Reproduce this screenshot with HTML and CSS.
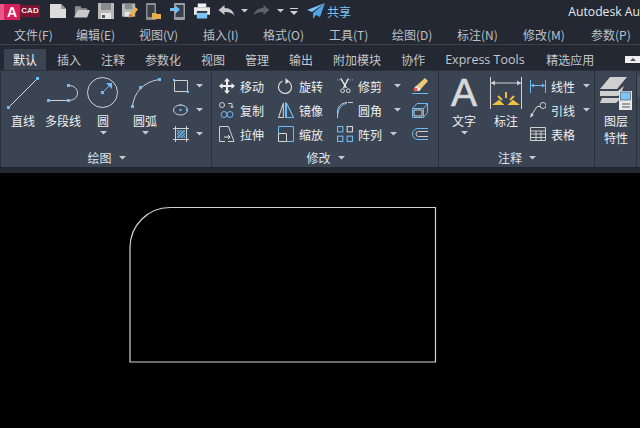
FILE: index.html
```html
<!DOCTYPE html>
<html lang="zh">
<head>
<meta charset="utf-8">
<title>Autodesk AutoCAD</title>
<link rel="stylesheet" href="styles.css">
</head>
<body>
<svg width="0" height="0" class="defs">
  <defs>
    <g id="tri"><path d="M0 0h7l-3.500 3.500z" fill="#c8ccd2"/></g>
  </defs>
</svg>
<header class="titlebar">
  <div class="logo"><span class="logo-a">A</span><span class="logo-cad">CAD</span></div>
  <div class="quick">
    <svg class="qa" width="16" height="16" viewBox="0 0 16 16"><path d="M0 1h11l5 5v9H0z" fill="#dcdcdc"/><path d="M11 1v5h5z" fill="#9a9a9a"/></svg>
    <svg class="qa" width="16" height="16" viewBox="0 0 17 16"><path d="M1 3h6l1 2h6v2H4L1 14z" fill="#8d8d8d"/><path d="M4 7h13l-3 8H0z" fill="#c9c9c9"/></svg>
    <svg class="qa" width="16" height="16" viewBox="0 0 16 16"><path d="M0 0h16v16H0z" fill="#b9b9b9"/><path d="M3 0h10v7H3z" fill="#8b8b8b"/><path d="M3 10h10v6H3z" fill="#e5e5e5"/><path d="M4 12h3v3H4z" fill="#555"/></svg>
    <svg class="qa" width="16" height="17" viewBox="0 0 17 17"><path d="M0 0h14v14H0z" fill="#b9b9b9"/><path d="M3 0h8v6H3z" fill="#8b8b8b"/><path d="M3 9h6v5H3z" fill="#e5e5e5"/><path d="M7 15l1-4 6-7 3 2-6 8z" fill="#e8b34e"/><path d="M7 15l1-4 3 2z" fill="#e06a5a"/></svg>
    <svg class="qa" width="16" height="17" viewBox="0 0 16 17"><rect x="0" y="0" width="10" height="17" rx="1" fill="#8a8f96"/><rect x="1.500" y="2" width="7" height="12" fill="#3a3f48"/><path d="M6 10h4l1 1h4v5H6z" fill="#e7b04c"/></svg>
    <svg class="qa" width="16" height="17" viewBox="0 0 16 17"><rect x="4" y="0" width="11" height="17" rx="1" fill="#9a9ea5"/><rect x="5.500" y="2" width="8" height="12" fill="#3a3f48"/><path d="M0 5h5V2l5 4.500-5 4.500V8H0z" fill="#6cc0f5"/></svg>
    <svg class="qa" width="16" height="16" viewBox="0 0 17 16"><path d="M4 0h9v4H4z" fill="#f2f2f2"/><path d="M0 4h17v8H0z" fill="#e8e8e8"/><path d="M3 8h11v8H3z" fill="#7cc2f2"/><path d="M3 8h11v2H3z" fill="#33373f"/></svg>
    <svg class="undo" width="17" height="12" viewBox="0 0 16 12"><path d="M0 5l6-5v3c6 0 9 3 10 8-2-3-5-4-10-4v3z" fill="#c8c8c8"/></svg>
    <svg class="qa-tri" width="7" height="4" viewBox="0 0 7 4"><use href="#tri"/></svg>
    <svg class="redo" width="17" height="12" viewBox="0 0 16 12"><path d="M16 5l-6-5v3C4 3 1 6 0 11c2-3 5-4 10-4v3z" fill="#5d6168"/></svg>
    <svg class="qa-tri" width="7" height="4" viewBox="0 0 7 4"><use href="#tri"/></svg>
    <svg class="qa-more" width="8" height="7" viewBox="0 0 8 7"><path d="M0 0h8v1H0z" fill="#d0d0d0"/><path d="M0 3h8L4 7z" fill="#d0d0d0"/></svg>
    <svg class="share-icon" width="18" height="16" viewBox="0 0 18 16"><path d="M18 0L0 7l5 2z" fill="#7cc4f5"/><path d="M18 0L6 10v6l3-4 4 2z" fill="#4da3e0"/></svg>
    <span class="share">共享</span>
  </div>
  <div class="apptitle">Autodesk Au</div>
</header>
<nav class="menubar">
  <span>文件(F)</span><span>编辑(E)</span><span>视图(V)</span><span>插入(I)</span><span>格式(O)</span><span>工具(T)</span><span>绘图(D)</span><span>标注(N)</span><span>修改(M)</span><span>参数(P)</span>
</nav>
<nav class="tabs">
  <span class="tab active">默认</span><span class="tab">插入</span><span class="tab">注释</span><span class="tab">参数化</span><span class="tab">视图</span><span class="tab">管理</span><span class="tab">输出</span><span class="tab">附加模块</span><span class="tab">协作</span><span class="tab en">Express Tools</span><span class="tab">精选应用</span>
  <span class="collapse"><svg width="6" height="3" viewBox="0 0 6 3"><path d="M0 3l3-3 3 3z" fill="#555"/></svg></span>
</nav>
<section class="ribbon">
  <div class="panel draw">
    <div class="panel-body">
      <div class="big w-line">
        <svg width="32" height="32" viewBox="0 0 32 32"><path d="M1.500 30.500L30.500 1.500" stroke="#d8d8d8" fill="none"/><rect x="0" y="29" width="3" height="3" fill="#6ebcf5"/><rect x="29" y="0" width="3" height="3" fill="#6ebcf5"/></svg>
        <span>直线</span>
      </div>
      <div class="big w-pline">
        <svg width="32" height="32" viewBox="0 0 32 32"><path d="M2 23.500h19.500M21.500 8.500c12 0 12 15 0 15" stroke="#d0d0d0" fill="none"/><rect x="0" y="22" width="3" height="3" fill="#6ebcf5"/><rect x="20" y="22" width="3" height="3" fill="#6ebcf5"/><rect x="20" y="7" width="3" height="3" fill="#6ebcf5"/></svg>
        <span>多段线</span>
      </div>
      <div class="big w-circle">
        <svg width="32" height="32" viewBox="0 0 32 32"><circle cx="15.500" cy="15.500" r="15" stroke="#d0d0d0" fill="none"/><path d="M15.500 15.500l7-7" stroke="#6ebcf5" fill="none"/><path d="M25 6v6l-6-6z" fill="#6ebcf5"/><rect x="14" y="14" width="3" height="3" fill="#6ebcf5"/></svg>
        <span>圆</span>
        <svg class="tri" width="7" height="4" viewBox="0 0 7 4"><use href="#tri"/></svg>
      </div>
      <div class="big w-arc">
        <svg width="32" height="32" viewBox="0 0 32 32"><path d="M3.500 29C5 16 14 5 30 2.500" stroke="#d0d0d0" fill="none"/><rect x="2" y="28" width="3" height="3" fill="#6ebcf5"/><rect x="10" y="9" width="3" height="3" fill="#6ebcf5"/><rect x="29" y="1" width="3" height="3" fill="#6ebcf5"/></svg>
        <span>圆弧</span>
        <svg class="tri" width="7" height="4" viewBox="0 0 7 4"><use href="#tri"/></svg>
      </div>
      <div class="minis">
        <div class="mini"><svg width="16" height="16" viewBox="0 0 16 16"><path d="M1.500 2.500h13v11h-13z" stroke="#d0d0d0" fill="none"/><rect x="0" y="1" width="2" height="2" fill="#6ebcf5"/><rect x="14" y="13" width="2" height="2" fill="#6ebcf5"/></svg><svg class="tri" width="7" height="4" viewBox="0 0 7 4"><use href="#tri"/></svg></div>
        <div class="mini"><svg width="16" height="16" viewBox="0 0 16 16"><ellipse cx="7.500" cy="8" rx="7" ry="5" stroke="#d0d0d0" fill="none"/><rect x="6.500" y="2" width="2" height="2" fill="#6ebcf5"/><rect x="6.500" y="7" width="2" height="2" fill="#6ebcf5"/><rect x="13" y="7" width="2" height="2" fill="#6ebcf5"/></svg><svg class="tri" width="7" height="4" viewBox="0 0 7 4"><use href="#tri"/></svg></div>
        <div class="mini"><svg width="16" height="16" viewBox="0 0 16 16"><path d="M2.500 0v16M13.500 0v16M0 2.500h16M0 13.500h16" stroke="#d0d0d0" fill="none"/><path d="M4 4h8v8H4z" fill="#6ebcf5" opacity=".75"/><path d="M4 10l6-6M6 12l6-6M4 7l3-3M9 12l3-3" stroke="#3c4552" stroke-width=".7"/></svg><svg class="tri" width="7" height="4" viewBox="0 0 7 4"><use href="#tri"/></svg></div>
      </div>
    </div>
    <div class="panel-title">绘图<svg width="7" height="4" viewBox="0 0 7 4"><use href="#tri"/></svg></div>
  </div>

  <div class="panel modify">
    <div class="panel-body">
      <div class="modgrid">
        <div class="tool"><svg width="16" height="16" viewBox="0 0 16 16"><path d="M8 0l3 3.500H9V7h3.500V5L16 8l-3.500 3V9H9v3.500h2L8 16l-3-3.500h2V9H3.500v2L0 8l3.500-3v2H7V3.500H5z" fill="#ececec"/></svg><span>移动</span></div>
        <div class="tool"><svg width="16" height="16" viewBox="0 0 15 16"><path d="M10 3.500A6.500 6.500 0 1 1 4 3" stroke="#d8d8d8" stroke-width="1.200" fill="none"/><path d="M7 0l4 3.500L7 6z" fill="#e0e0e0"/></svg><span>旋转</span></div>
        <div class="tool"><svg width="16" height="16" viewBox="0 0 17 16"><path d="M0 1.500h5M12 1.500h5" stroke="#6ebcf5" stroke-dasharray="1 1"/><path d="M4 0l6 10M12 0L7 10" stroke="#e8e8e8" stroke-width="1.500"/><circle cx="6" cy="13" r="2" stroke="#e8e8e8" fill="none"/><circle cx="12" cy="13" r="2" stroke="#e8e8e8" fill="none"/></svg><span>修剪</span><svg class="tri" width="7" height="4" viewBox="0 0 7 4"><use href="#tri"/></svg></div>
        <svg class="edit" width="16" height="16" viewBox="0 0 16 16"><path d="M3 9L13 0l3 3-9 10z" fill="#f0c878"/><path d="M2 10l2-2 5 3-2 2H3z" fill="#f0f0f0"/><circle cx="3.500" cy="11.500" r="2" fill="#e8584f"/><path d="M0 15.500h16" stroke="#6ebcf5"/></svg>

        <div class="tool"><svg width="16" height="16" viewBox="0 0 16 16"><circle cx="3" cy="3" r="2.500" stroke="#d0d0d0" fill="none"/><path d="M9 1.500h4V5M11.500 4l1.500 2 1.500-2" stroke="#d0d0d0" fill="none"/><circle cx="5" cy="12.500" r="3" stroke="#6ebcf5" fill="none"/><circle cx="11" cy="12.500" r="3" stroke="#6ebcf5" fill="none"/></svg><span>复制</span></div>
        <div class="tool"><svg width="16" height="16" viewBox="0 0 15 15"><path d="M5 1L.5 14.500H5z" stroke="#d0d0d0" fill="none"/><path d="M8 1l6.500 13.500H8zM7 0v15" stroke="#6ebcf5" fill="none"/></svg><span>镜像</span></div>
        <div class="tool"><svg width="16" height="16" viewBox="0 0 16 16"><path d="M.5 16v-6C.5 5 4 1 10 .5M11 .5h5" stroke="#d0d0d0" fill="none"/><path d="M.5 15C1 6 5 2 10 1.500" stroke="#6ebcf5" fill="none"/></svg><span>圆角</span><svg class="tri" width="7" height="4" viewBox="0 0 7 4"><use href="#tri"/></svg></div>
        <svg class="edit" width="16" height="15" viewBox="0 0 16 15"><path d="M.5 5.500h11v9H.5zM.5 5.500L5 .5h10.500v9l-4 5M11.500 5.500l4-5" stroke="#6ebcf5" fill="none"/><path d="M2 7h8v6H2z" stroke="#d8d8d8" fill="none"/></svg>

        <div class="tool"><svg width="16" height="16" viewBox="0 0 16 16"><path d="M6 15.500H.5V.5h9M9.500.500L15 15.500H9" stroke="#d0d0d0" fill="none"/><path d="M5 11h6M9 9l2 2-2 2" stroke="#e8e8e8" fill="none"/></svg><span>拉伸</span></div>
        <div class="tool"><svg width="16" height="16" viewBox="0 0 16 16"><path d="M.5 7V.5h15v15H9" stroke="#6ebcf5" fill="none"/><path d="M.5 7.500h8v8h-8z" stroke="#d8d8d8" fill="none"/></svg><span>缩放</span></div>
        <div class="tool"><svg width="16" height="16" viewBox="0 0 15 15"><g fill="none" stroke="#6ebcf5"><rect x=".5" y=".5" width="5" height="5"/><rect x="9.500" y="9.500" width="5" height="5"/><rect x=".5" y="9.500" width="5" height="5"/></g><rect x="9.500" y=".5" width="5" height="5" fill="none" stroke="#d8d8d8"/></svg><span>阵列</span><svg class="tri tri-near" width="7" height="4" viewBox="0 0 7 4"><use href="#tri"/></svg></div>
        <svg class="edit" width="16" height="12" viewBox="0 0 16 12"><path d="M16 .5H6a5.500 5.500 0 0 0 0 11h10" stroke="#6ebcf5" fill="none"/><path d="M16 3.500H6.500a2.500 2.500 0 0 0 0 5H16" stroke="#d0d0d0" fill="none"/></svg>
      </div>
    </div>
    <div class="panel-title">修改<svg width="7" height="4" viewBox="0 0 7 4"><use href="#tri"/></svg></div>
  </div>

  <div class="panel annot">
    <div class="panel-body">
      <div class="big w-text">
        <span class="bigA">A</span>
        <span>文字</span>
        <svg class="tri" width="7" height="4" viewBox="0 0 7 4"><use href="#tri"/></svg>
      </div>
      <div class="big w-dim">
        <svg width="32" height="32" viewBox="0 0 32 32"><path d="M.5 0v32M31.500 0v32M1 6h30" stroke="#d0d0d0" fill="none"/><path d="M1 6l4-2.500v5zM31 6l-4-2.500v5z" fill="#d0d0d0"/><path d="M16 15v6M8 19l4 4M24 19l-4 4M5 27h7l-3-3zM27 27h-7l3-3z" stroke="#f0c040" stroke-width="2" fill="#f0c040"/></svg>
        <span>标注</span>
      </div>
      <div class="annot-list">
        <div class="tool"><svg width="16" height="16" viewBox="0 0 16 16"><path d="M.5 2v13M15.500 2v13M1 7.500h14" stroke="#6ebcf5" fill="none"/><path d="M1 7.500l3-2v4zM15 7.500l-3-2v4z" fill="#6ebcf5"/></svg><span>线性</span><svg class="tri tri-near" width="7" height="4" viewBox="0 0 7 4"><use href="#tri"/></svg></div>
        <div class="tool"><svg width="16" height="16" viewBox="0 0 16 16"><circle cx="13" cy="3.500" r="3" stroke="#d0d0d0" fill="none"/><path d="M10.500 4.500H7L1 14" stroke="#d0d0d0" fill="none"/><path d="M0 16l1-5 3 2z" fill="#d0d0d0"/></svg><span>引线</span><svg class="tri tri-near" width="7" height="4" viewBox="0 0 7 4"><use href="#tri"/></svg></div>
        <div class="tool"><svg width="16" height="14" viewBox="0 0 16 14"><path d="M.5.500h15v13H.5zM.5 4h15M.5 7h15M.5 10.500h15M6 4v9.500M11 4v9.500" stroke="#d0d0d0" fill="none"/></svg><span>表格</span></div>
      </div>
    </div>
    <div class="panel-title">注释<svg width="7" height="4" viewBox="0 0 7 4"><use href="#tri"/></svg></div>
  </div>

  <div class="panel layer">
    <div class="panel-body">
      <div class="big w-layer">
        <svg width="32" height="33" viewBox="0 0 32 33"><path d="M10 0h17L17 12H0z" fill="#cfcfcf"/><path d="M0 14h18l6-5-3 7-3 3H0z" fill="#cfcfcf"/><path d="M2 21h17v2l-3 3H0z" fill="#cfcfcf"/><rect x="19" y="14" width="13" height="19" fill="#e8e8e8"/><rect x="20.500" y="15" width="10" height="8" fill="#7cc4f5" stroke="#333" stroke-width=".5"/><path d="M22 27h8M22 30h8" stroke="#555"/></svg>
        <span class="layer-label">图层</span>
        <span class="layer-label">特性</span>
      </div>
    </div>
  </div>
  <div class="panel-next"></div>
</section>
<main class="canvas">
  <svg class="drawing" width="640" height="255" viewBox="0 0 640 255"><path d="M130 189V74.500a40 40 0 0 1 40-40H435.500V189z" fill="none" stroke="#d2d2d2" stroke-width="1.200"/></svg>
</main>
</body>
</html>
```
FILE: styles.css
```css
* { box-sizing: border-box; }
html, body { margin: 0; padding: 0; }
body {
  width: 640px;
  height: 428px;
  overflow: hidden;
  background: #232833;
  font-family: "Noto Sans CJK SC", "Liberation Sans", sans-serif;
  color: #dfe3e8;
  display: flex;
  flex-direction: column;
}
svg { display: block; flex: none; }
.defs { position: absolute; }
.titlebar {
  height: 24px;
  padding-bottom: 2px;
  background: #232833;
  display: flex;
  align-items: center;
  flex: none;
}
.logo { width: 40px; height: 16px; display: flex; margin-top: 2px; flex: none; }
.logo-a {
  width: 20px;
  padding-left: 4px;
  background: linear-gradient(90deg, #e8578a 0 4px, #d81f5a 4px);
  color: #fff;
  font: bold 14px/16px "Liberation Sans", sans-serif;
  text-align: center;
}
.logo-cad {
  width: 20px;
  height: 12px;
  margin-top: 1px;
  background: #7d1233;
  color: #eee;
  font: bold 8px/12px "Liberation Sans", sans-serif;
  text-align: center;
}
.quick { display: flex; align-items: center; margin-left: 10px; flex: none; }
.qa { margin-right: 8px; }
.undo { margin-right: 6px; }
.redo { margin-left: 5px; margin-right: 7px; }
.qa-more { margin-left: 6px; }
.share-icon { margin-left: 9px; }
.share { margin-left: 2px; color: #7cc4f5; font-size: 12px; }
.apptitle {
  margin-left: auto;
  white-space: nowrap;
  color: #e8eaee;
  font: 12.200px "Open Sans", "Liberation Sans", sans-serif;
}
.menubar {
  height: 21px;
  background: #232833;
  border-bottom: 1px solid #3b424e;
  display: flex;
  align-items: center;
  padding-left: 14px;
  font-size: 12px;
  color: #bcc1c8;
  white-space: nowrap;
  flex: none;
}
.menubar span { width: 63px; flex: none; }
.menubar span:nth-child(1) { width: 62px; }
.menubar span:nth-child(3) { width: 64px; }
.menubar span:nth-child(4) { width: 60px; }
.menubar span:nth-child(5) { width: 66px; }
.menubar span:nth-child(7) { width: 65px; }
.menubar span:nth-child(8) { width: 66px; }
.menubar span:nth-child(9) { width: 68px; }
.tabs {
  height: 25px;
  background: #232833;
  display: flex;
  align-items: flex-end;
  padding-left: 4px;
  font-size: 12px;
  color: #c3c7cd;
  position: relative;
  flex: none;
}
.tab { height: 21px; line-height: 21px; padding: 0 10px; white-space: nowrap; flex: none; }
.tab.active { background: #3b4452; color: #f0f2f5; padding: 0 9px; margin-right: 1px; }
.tab.en { font: 12.500px/21px "Open Sans", "Liberation Sans", sans-serif; width: 101px; }
.collapse {
  position: absolute;
  right: 0;
  top: 11px;
  width: 15px;
  height: 7px;
  background: #eee;
  display: flex;
  align-items: center;
  justify-content: center;
}
.ribbon {
  height: 98px;
  background: #3b4452;
  border-bottom: 1px solid #222730;
  border-top: 1px solid #2c323d;
  display: flex;
  flex: none;
  overflow: hidden;
}
.panel {
  flex: none;
  display: flex;
  flex-direction: column;
  height: 96px;
  border-right: 1px solid #2a303a;
}
.panel-body { flex: 1; display: flex; min-height: 0; }
.panel-title {
  height: 17px;
  font-size: 12px;
  line-height: 16px;
  color: #dfe3e8;
  display: flex;
  align-items: center;
  justify-content: center;
  gap: 7px;
  flex: none;
  padding: 0 6px 1px 0;
}
.draw { width: 212px; padding-left: 7px; border-left: 1px solid #2a303a; }
.modify { width: 227px; padding-left: 7px; }
.annot { width: 156px; padding-left: 7px; }
.layer { width: 42px; }
.panel-next { width: 3px; height: 21px; margin-top: 5px; background: #4a5260; }
.big {
  display: flex;
  flex-direction: column;
  align-items: center;
  font-size: 12px;
  line-height: 15px;
  white-space: nowrap;
  color: #eef0f3;
  padding-top: 6px;
  flex: none;
}
.big > svg:first-child { margin-bottom: 4px; }
.big .tri { margin-top: 3px; }
.w-line { width: 32px; margin-left: -1px; }
.w-pline { width: 36px; margin-left: 6px; }
.w-circle { width: 32px; margin-left: 6px; }
.w-arc { width: 32px; margin-left: 10px; }
.minis { margin-left: 12px; display: flex; flex-direction: column; gap: 8px; padding-top: 7px; }
.mini { display: flex; align-items: center; gap: 7px; height: 16px; }
.modgrid {
  display: grid;
  grid-template-columns: 59px 59px 75px 16px;
  grid-auto-rows: 16px;
  row-gap: 8px;
  padding-top: 7px;
  align-items: center;
}
.tool { display: flex; align-items: center; gap: 5px; font-size: 12px; color: #eef0f3; white-space: nowrap; }
.tool .tri { margin-left: 7px; }
.tool .tri-near { margin-left: 3px; }
.edit { justify-self: start; }
.w-text { width: 36px; }
.bigA {
  font: 39px/32px "Liberation Sans", sans-serif;
  -webkit-text-stroke: .6px #d8d8d8;
  color: #d8d8d8;
  height: 32px;
  margin-bottom: 4px;
}
.w-dim { width: 32px; margin-left: 8px; }
.annot-list { display: flex; flex-direction: column; gap: 8px; margin-left: 8px; padding-top: 7px; }
.annot-list .tool { height: 16px; }
.w-layer { width: 38px; margin-left: 2px; }
.w-layer > svg:first-child { margin-bottom: 2px; }
.layer-label { line-height: 17px; }
.canvas { flex: 1; background: #000; margin-top: 5px; }
.drawing { display: block; }
```
